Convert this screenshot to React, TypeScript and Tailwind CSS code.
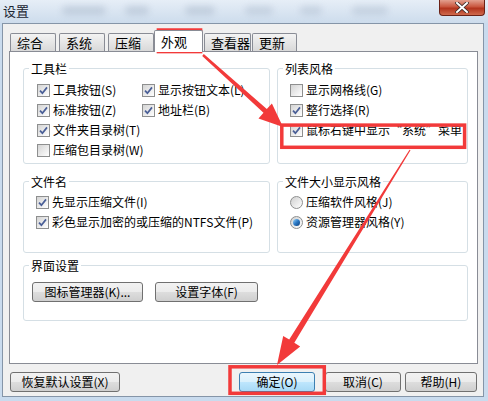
import React from 'react';

// tapered line + triangular head, as one polygon
const arrowPoints = (sx: number, sy: number, tx: number, ty: number, w1: number, w2: number, hl: number, hw: number) => {
  const dx = tx - sx;
  const dy = ty - sy;
  const len = Math.hypot(dx, dy);
  const ux = dx / len;
  const uy = dy / len;
  const px = -uy;
  const py = ux;
  const bx = tx - ux * hl;
  const by = ty - uy * hl;
  const pts = [
    [sx + (px * w1) / 2, sy + (py * w1) / 2],
    [bx + (px * w2) / 2, by + (py * w2) / 2],
    [bx + px * hw, by + py * hw],
    [tx, ty],
    [bx - px * hw, by - py * hw],
    [bx - (px * w2) / 2, by - (py * w2) / 2],
    [sx - (px * w1) / 2, sy - (py * w1) / 2],
  ];
  return pts.map(p => p.map(n => n.toFixed(1)).join(',')).join(' ');
};

const Check = ({ checked }: { checked?: boolean }) => (
  <span className="w-[13px] h-[13px] shrink-0 border border-[#8e8f8f] bg-gradient-to-br from-[#d4d4d4] to-white flex items-center justify-center">
    {checked && (
      <svg width="9" height="9" viewBox="0 0 9 9">
        <path d="M1 4.6 L3.4 7.2 L8 1.4" stroke="#4a5f97" strokeWidth="1.7" fill="none" />
      </svg>
    )}
  </span>
);

const Radio = ({ checked }: { checked?: boolean }) => (
  <span className="w-[13px] h-[13px] shrink-0 rounded-full border border-[#8e8f8f] bg-gradient-to-br from-[#d0d0d0] to-white flex items-center justify-center">
    {checked && <span className="w-[7px] h-[7px] rounded-full bg-gradient-to-br from-[#9bd8fb] via-[#2a78c4] to-[#0d3f7a]" />}
  </span>
);

const Item = ({ label, checked, radio }: { label: string; checked?: boolean; radio?: boolean }) => (
  <div className="h-[20px] flex items-center gap-[3px] whitespace-nowrap">
    {radio ? <Radio checked={checked} /> : <Check checked={checked} />}
    <span>{label}</span>
  </div>
);

const Btn = ({ children, className, primary }: { children: React.ReactNode; className?: string; primary?: boolean }) => (
  <div
    className={`h-[20px] rounded-[3px] border flex items-center justify-center whitespace-nowrap ${
      primary
        ? 'border-[#3c7fb1] bg-[linear-gradient(#eaf6fd,#d9f0fc_50%,#bee6fd_51%,#a7d9f5)]'
        : 'border-[#707070] bg-[linear-gradient(#f2f2f2,#ebebeb_50%,#dddddd_51%,#cfcfcf)]'
    } ${className ?? ''}`}
  >
    {children}
  </div>
);

const Group = ({ title, className, children }: { title: string; className?: string; children?: React.ReactNode }) => (
  <div className={`relative rounded-[3px] border border-[#d5dfe5] ${className ?? ''}`}>
    <span className="absolute -top-[7px] left-[5px] bg-white px-[2px] leading-[13px] text-[12px]">{title}</span>
    {children}
  </div>
);

const tabs = [
  { label: '综合', cls: 'w-[46px] mr-[3px]' },
  { label: '系统', cls: 'w-[46px] mr-[3px]' },
  { label: '压缩', cls: 'w-[46px] mr-0' },
  { label: '外观', cls: 'w-[49px] mr-[1px]', active: true },
  { label: '查看器', cls: 'w-[47px] mr-[1px]' },
  { label: '更新', cls: 'w-[45px] mr-0' },
];

export default function App() {
  return (
    <div className="relative w-[488px] h-[401px] overflow-hidden bg-[#c9dbee] font-['Noto_Sans_CJK_SC','Noto_Sans',sans-serif] text-[12px] leading-none text-black">
      {/* title bar */}
      <div className="relative h-[23px] flex items-start bg-gradient-to-b from-[#e6eef7] to-[#cddcec]">
        <span className="absolute left-[62px] top-[6px] w-[44px] h-[9px] rounded-full bg-[#8c9db3]/30 blur-[3px]" />
        <span className="absolute left-[125px] top-[6px] w-[24px] h-[9px] rounded-full bg-[#8c9db3]/30 blur-[3px]" />
        <span className="absolute left-[185px] top-[6px] w-[30px] h-[9px] rounded-full bg-[#8c9db3]/30 blur-[3px]" />
        <span className="absolute left-[245px] top-[6px] w-[28px] h-[9px] rounded-full bg-[#8c9db3]/25 blur-[3px]" />
        <span className="absolute left-[300px] top-[6px] w-[22px] h-[9px] rounded-full bg-[#8c9db3]/25 blur-[3px]" />
        <span className="absolute left-[352px] top-[6px] w-[36px] h-[9px] rounded-full bg-[#8c9db3]/25 blur-[3px]" />
        <span className="relative ml-[3px] mt-[4px] text-[13px] text-[#1b2533]">设置</span>
        <div className="relative ml-auto mr-[3px] w-[46px] h-[16px] rounded-b-[4px] border border-t-0 border-[#6b2216] bg-[linear-gradient(#e3a08f,#c9563e_45%,#b2341d_55%,#cf6a4d)] flex items-center justify-center">
          <svg width="14" height="11" viewBox="0 0 14 11">
            <path d="M2 1 L12 10 M12 1 L2 10" stroke="#3a2a28" strokeWidth="3.6" strokeLinecap="square" />
            <path d="M2 1 L12 10 M12 1 L2 10" stroke="#ffffff" strokeWidth="2" strokeLinecap="square" />
          </svg>
        </div>
      </div>

      {/* dialog body */}
      <div className="ml-[2px] mr-[4px] h-[374px] border border-[#8595a8] bg-[#f0f0f0]">
        {/* tabs */}
        <div className="relative z-10 flex items-end pt-[6px] pl-[7px]">
          {tabs.map(t => (
            <div
              key={t.label}
              className={`${t.cls} flex items-center pl-[6px] text-[13px] border border-b-0 border-[#898c95] rounded-t-[2px] ${
                t.active ? 'h-[22px] -mb-px bg-white' : 'h-[18px] bg-gradient-to-b from-[#f3f3f3] to-[#d9d9d9]'
              }`}
            >
              {t.label}
            </div>
          ))}
        </div>

        {/* tab page */}
        <div className="ml-[6px] mr-[5px] h-[313px] border border-[#898c95] bg-white pl-[13px] pr-[9px]">
          <div className="mt-[16px] flex gap-[7px]">
            <Group title="工具栏" className="w-[247px] h-[96px] pt-[11px] pl-[13px]">
              <div className="grid grid-cols-[105px_1fr]">
                <Item label="工具按钮(S)" checked />
                <Item label="显示按钮文本(L)" checked />
                <Item label="标准按钮(Z)" checked />
                <Item label="地址栏(B)" checked />
                <Item label="文件夹目录树(T)" checked />
                <div />
                <Item label="压缩包目录树(W)" />
              </div>
            </Group>
            <Group title="列表风格" className="flex-1 h-[96px] pt-[11px] pl-[12px]">
              <Item label="显示网格线(G)" />
              <Item label="整行选择(R)" checked />
              <Item label="鼠标右键中显示“系统”菜单" checked />
            </Group>
          </div>

          <div className="mt-[17px] flex gap-[7px]">
            <Group title="文件名" className="w-[247px] h-[72px] pt-[10px] pl-[12px]">
              <Item label="先显示压缩文件(I)" checked />
              <Item label="彩色显示加密的或压缩的NTFS文件(P)" checked />
            </Group>
            <Group title="文件大小显示风格" className="flex-1 h-[72px] pt-[10px] pl-[12px]">
              <Item label="压缩软件风格(J)" radio />
              <Item label="资源管理器风格(Y)" radio checked />
            </Group>
          </div>

          <Group title="界面设置" className="mt-[12px] h-[56px] pt-[16px] pl-[8px]">
            <div className="flex gap-[12px]">
              <Btn className="w-[111px]">图标管理器(K)...</Btn>
              <Btn className="w-[103px]">设置字体(F)</Btn>
            </div>
          </Group>
        </div>

        {/* dialog buttons */}
        <div className="mt-[8px] flex pl-[7px] pr-[6px]">
          <Btn className="w-[110px]">恢复默认设置(X)</Btn>
          <Btn primary className="ml-auto w-[76px]">确定(O)</Btn>
          <Btn className="ml-[10px] w-[76px]">取消(C)</Btn>
          <Btn className="ml-[4px] w-[72px]">帮助(H)</Btn>
        </div>
      </div>

      {/* red annotations */}
      <svg className="absolute inset-0 pointer-events-none" width="488" height="401" viewBox="0 0 488 401">
        <rect x="158.4" y="30" width="42.2" height="21.6" fill="none" stroke="#f23a3a" strokeWidth="3.5" />
        <rect x="281.8" y="125.1" width="182.8" height="22.2" fill="none" stroke="#f23a3a" strokeWidth="3.5" />
        <rect x="230" y="366.8" width="94.3" height="26.5" fill="none" stroke="#f23a3a" strokeWidth="3.5" />
        <polygon points={arrowPoints(203, 55, 283, 127, 2.5, 5, 24, 10)} fill="#f23a3a" />
        <polygon points={arrowPoints(410, 150, 277, 365, 1.2, 6, 28, 10)} fill="#f23a3a" />
      </svg>
    </div>
  );
}
